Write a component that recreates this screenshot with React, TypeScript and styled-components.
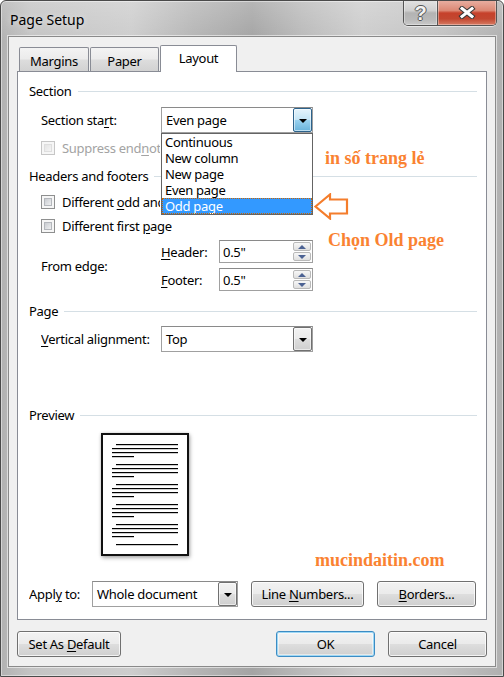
import React from "react";
import styled, { createGlobalStyle } from "styled-components";

const GlobalStyle = createGlobalStyle`
  html, body { margin: 0; padding: 0; background: #ffffff; }
  body { font-family: "Noto Sans", "Open Sans", Arial, sans-serif; }
  *, *::before, *::after { box-sizing: border-box; }
`;

const Window = styled.div`
  position: relative;
  width: 504px;
  height: 677px;
  display: flex;
  flex-direction: column;
  border: 1px solid #4a4a4a;
  border-radius: 6px 6px 0 0;
  background:
    linear-gradient(180deg, rgba(255,255,255,0.2) 0%, rgba(255,255,255,0) 40px),
    linear-gradient(90deg, #b2b2b2 0%, #c4c4c4 6%, #cdcdcd 26%, #b6b6b6 38%, #a4a4a4 50%, #bababa 60%, #cdcdcd 72%, #c2c2c2 88%, #b0b0b0 100%);
  box-shadow: inset 0 0 0 1px rgba(255,255,255,0.45);
  overflow: hidden;
`;

const TitleBar = styled.div`
  flex: none;
  height: 35px;
  display: flex;
  align-items: flex-start;
  justify-content: space-between;
  padding: 0 6px 0 9px;
`;

const TitleText = styled.div`
  margin-top: 9px;
  font-size: 14px;
  line-height: 20px;
  color: #000;
  text-shadow: 0 0 6px rgba(255,255,255,0.7);
`;

const CaptionGroup = styled.div`
  display: flex;
  margin-top: -1px;
  height: 26px;
  border: 1px solid #555;
  border-top: none;
  border-radius: 0 0 5px 5px;
  overflow: hidden;
  box-shadow: 0 1px 0 rgba(255,255,255,0.55);
`;

const CaptionButton = styled.div<{ $close?: boolean }>`
  width: ${(p) => (p.$close ? 59 : 33)}px;
  display: flex;
  align-items: center;
  justify-content: center;
  box-shadow: inset 0 0 0 1px rgba(255,255,255,0.35);
  background: ${(p) =>
    p.$close
      ? "linear-gradient(180deg, #e9b1a4 0%, #dc8874 42%, #c6412b 52%, #c24730 75%, #d77b63 100%)"
      : "linear-gradient(180deg, #e3e3e3 0%, #cfcfcf 42%, #b3b3b3 52%, #b9b9b9 78%, #c9c9c9 100%)"};
  & + & {
    border-left: 1px solid #555;
  }
`;

const HelpGlyph = styled.span`
  font-family: "Liberation Sans", Arial, sans-serif;
  font-weight: 700;
  font-size: 20px;
  line-height: 20px;
  color: #f2f2f2;
  text-shadow: 1px 0 0 #555, -1px 0 0 #555, 0 1px 0 #555, 0 -1px 0 #555;
`;

const Client = styled.div`
  flex: 1;
  margin: 0 7px 9px 7px;
  background: #f0f0f0;
  border: 1px solid #8a8a8a;
  box-shadow: 0 0 0 1px rgba(255,255,255,0.55);
  padding: 8px 8px 9px 8px;
  display: flex;
  flex-direction: column;
  font-size: 13px;
  letter-spacing: -0.3px;
  color: #000;
`;

const TabRow = styled.div`
  position: relative;
  z-index: 2;
  flex: none;
  height: 27px;
  margin-bottom: -1px;
  padding-left: 2px;
  display: flex;
  align-items: flex-end;
`;

const Tab = styled.div<{ $w: number; $active?: boolean }>`
  width: ${(p) => p.$w}px;
  height: ${(p) => (p.$active ? 27 : 24)}px;
  margin-bottom: ${(p) => (p.$active ? 0 : 1)}px;
  margin-right: ${(p) => (p.$active ? 0 : 1)}px;
  border: 1px solid #898c95;
  border-bottom: none;
  border-radius: 2px 2px 0 0;
  display: flex;
  justify-content: center;
  align-items: center;
  padding-top: ${(p) => (p.$active ? 0 : 3)}px;
  padding-bottom: ${(p) => (p.$active ? 2 : 0)}px;
  background: ${(p) =>
    p.$active ? "#ffffff" : "linear-gradient(180deg, #f3f3f3 0%, #ebebeb 48%, #dddddd 52%, #d2d2d2 100%)"};
`;

const Panel = styled.div`
  position: relative;
  z-index: 1;
  flex: none;
  height: 549px;
  background: #ffffff;
  border: 1px solid #898c95;
  padding: 10px 9px 12px 11px;
  display: flex;
  flex-direction: column;
`;

const GroupHeader = styled.div<{ $top?: number }>`
  flex: none;
  display: flex;
  align-items: center;
  gap: 6px;
  height: 18px;
  margin-top: ${(p) => p.$top ?? 0}px;
  white-space: nowrap;
  &::after {
    content: "";
    flex: 1;
    height: 1px;
    background: #d5dfe5;
  }
`;

const FieldRow = styled.div<{ $top?: number; $indent?: number }>`
  flex: none;
  display: flex;
  align-items: center;
  height: 26px;
  margin-top: ${(p) => p.$top ?? 0}px;
  padding-left: ${(p) => p.$indent ?? 0}px;
`;

const Label = styled.span<{ $w?: number; $disabled?: boolean }>`
  flex: none;
  width: ${(p) => (p.$w ? `${p.$w}px` : "auto")};
  white-space: nowrap;
  overflow: hidden;
  color: ${(p) => (p.$disabled ? "#a3a3a3" : "#000")};
  line-height: 16px;
`;

const Key = styled.span`
  text-decoration: underline;
  text-underline-offset: 2px;
  text-decoration-thickness: 1px;
`;

const CheckRow = styled.div<{ $top?: number }>`
  flex: none;
  display: flex;
  align-items: center;
  gap: 7px;
  height: 16px;
  margin-top: ${(p) => p.$top ?? 0}px;
  padding-left: 12px;
`;

const CheckBox = styled.span<{ $disabled?: boolean }>`
  flex: none;
  width: 14px;
  height: 14px;
  border: 1px solid ${(p) => (p.$disabled ? "#c6c6c6" : "#8e8f8f")};
  background: #f6f6f6;
  padding: 2px;
  &::before {
    content: "";
    display: block;
    width: 100%;
    height: 100%;
    border: 1px solid ${(p) => (p.$disabled ? "#dedede" : "#b4b7bc")};
    background: ${(p) =>
      p.$disabled
        ? "linear-gradient(135deg, #e4e4e4 0%, #f4f4f4 100%)"
        : "linear-gradient(135deg, #c9ccd1 0%, #eeeff0 100%)"};
  }
`;

const Combo = styled.div<{ $w: number }>`
  position: relative;
  flex: none;
  width: ${(p) => p.$w}px;
  height: 26px;
  border: 1px solid #a0a0a0;
  border-top-color: #8a8a8a;
  background: #fff;
  display: flex;
  align-items: stretch;
`;

const ComboValue = styled.span`
  flex: 1;
  padding-left: 4px;
  display: flex;
  align-items: center;
  white-space: nowrap;
`;

const ComboButton = styled.span<{ $open?: boolean }>`
  flex: none;
  width: 19px;
  display: flex;
  align-items: center;
  justify-content: center;
  border: 1px solid ${(p) => (p.$open ? "#2c628b" : "#707070")};
  border-radius: 2px;
  box-shadow: inset 0 0 0 1px rgba(255,255,255,0.55);
  background: ${(p) =>
    p.$open
      ? "linear-gradient(180deg, #e5f4fc 0%, #c4e5f6 48%, #98d1ef 52%, #68b3db 100%)"
      : "linear-gradient(180deg, #f2f2f2 0%, #ebebeb 48%, #dddddd 52%, #cfcfcf 100%)"};
`;

const DownArrow = styled.span`
  width: 0;
  height: 0;
  border-left: 4px solid transparent;
  border-right: 4px solid transparent;
  border-top: 4px solid #000;
  margin-top: 1px;
`;

const DropList = styled.div`
  position: absolute;
  z-index: 5;
  top: calc(100% + 1px);
  left: -1px;
  right: -1px;
  background: #fff;
  border: 1px solid #646464;
  display: flex;
  flex-direction: column;
`;

const DropItem = styled.div<{ $selected?: boolean }>`
  height: 16px;
  line-height: 16px;
  padding-left: 3px;
  white-space: nowrap;
  color: ${(p) => (p.$selected ? "#fff" : "#000")};
  background: ${(p) => (p.$selected ? "#3399ff" : "transparent")};
  outline: ${(p) => (p.$selected ? "1px dotted #cc6600" : "none")};
  outline-offset: -1px;
`;

const EdgeGrid = styled.div`
  flex: none;
  display: grid;
  grid-template-columns: 120px 58px 94px;
  grid-template-rows: 23px 23px;
  row-gap: 5px;
  align-items: center;
  margin-top: 6px;
  padding-left: 12px;
`;

const SpanLabel = styled(Label)`
  grid-row: 1 / span 2;
`;

const SpinBox = styled.div`
  height: 23px;
  border: 1px solid #a0a0a0;
  border-top-color: #8a8a8a;
  background: #fff;
  display: flex;
`;

const SpinValue = styled.span`
  flex: 1;
  padding-left: 3px;
  display: flex;
  align-items: center;
`;

const SpinButtons = styled.div`
  flex: none;
  width: 19px;
  padding: 1px 1px 1px 0;
  display: flex;
  flex-direction: column;
  gap: 1px;
`;

const SpinButton = styled.span`
  flex: 1;
  display: flex;
  align-items: center;
  justify-content: center;
  border: 1px solid #b9b9b9;
  border-radius: 2px;
  background: linear-gradient(180deg, #f7f7f7 0%, #ececec 50%, #dfdfdf 100%);
`;

const SpinArrow = styled.span<{ $up?: boolean }>`
  width: 0;
  height: 0;
  border-left: 4px solid transparent;
  border-right: 4px solid transparent;
  ${(p) => (p.$up ? "border-bottom: 4px solid #4c6293;" : "border-top: 4px solid #4c6293;")}
`;

const PreviewPage = styled.div`
  flex: none;
  width: 88px;
  height: 123px;
  margin: 9px 0 0 72px;
  border: 2px solid #111;
  background: #fff;
  box-shadow: 1px 2px 4px rgba(0,0,0,0.3), 0 0 3px rgba(0,0,0,0.15);
  svg { display: block; }
`;

const ApplyRow = styled.div`
  flex: none;
  margin-top: auto;
  height: 26px;
  display: flex;
  align-items: center;
`;

const PushButton = styled.div<{ $w: number; $left?: number; $default?: boolean }>`
  flex: none;
  width: ${(p) => p.$w}px;
  height: 26px;
  margin-left: ${(p) => p.$left ?? 0}px;
  display: flex;
  align-items: center;
  justify-content: center;
  white-space: nowrap;
  border: 1px solid ${(p) => (p.$default ? "#3c8cc4" : "#707070")};
  border-radius: 3px;
  background: linear-gradient(180deg, #f2f2f2 0%, #ebebeb 48%, #dddddd 52%, #cfcfcf 100%);
  box-shadow: ${(p) =>
    p.$default
      ? "inset 0 0 0 1px #9fd8f5, inset 0 0 0 2px rgba(255,255,255,0.5)"
      : "inset 0 0 0 1px rgba(255,255,255,0.75)"};
`;

const ButtonText = styled.span`
  white-space: pre;
  line-height: 16px;
`;

const Footer = styled.div`
  flex: none;
  margin-top: 11px;
  height: 26px;
  display: flex;
  align-items: center;
`;

const FooterSpacer = styled.div`
  flex: 1;
`;

const Annotation = styled.div<{ $x: number; $y: number }>`
  position: absolute;
  z-index: 10;
  left: ${(p) => p.$x}px;
  top: ${(p) => p.$y}px;
  font-family: "Liberation Serif", "Times New Roman", serif;
  font-weight: 700;
  font-size: 18px;
  line-height: 22px;
  letter-spacing: 0;
  color: #fa8231;
  white-space: nowrap;
`;

const ArrowMark = styled.svg`
  position: absolute;
  z-index: 10;
  left: 296px;
  top: 121px;
`;

const previewLines = (() => {
  const rects: { x: number; y: number; w: number }[] = [];
  for (let g = 0; g < 5; g++) {
    const y = 9 + g * 20;
    rects.push({ x: 13, y, w: 62 });
    rects.push({ x: 9, y: y + 4, w: 66 });
    rects.push({ x: 9, y: y + 8, w: 66 });
    rects.push({ x: 9, y: y + 12, w: 22 });
  }
  rects.push({ x: 13, y: 109, w: 62 });
  return rects;
})();

const items = ["Continuous", "New column", "New page", "Even page", "Odd page"];

export default function App() {
  return (
    <>
      <GlobalStyle />
      <Window>
        <TitleBar>
          <TitleText>Page Setup</TitleText>
          <CaptionGroup>
            <CaptionButton>
              <HelpGlyph>?</HelpGlyph>
            </CaptionButton>
            <CaptionButton $close>
              <svg width="18" height="13" viewBox="0 0 18 13">
                <path d="M4 2.5 L14 10.5 M14 2.5 L4 10.5" stroke="#3a3a3a" strokeWidth="5" strokeLinecap="square" fill="none" />
                <path d="M4 2.5 L14 10.5 M14 2.5 L4 10.5" stroke="#ffffff" strokeWidth="3" strokeLinecap="square" fill="none" />
              </svg>
            </CaptionButton>
          </CaptionGroup>
        </TitleBar>
        <Client>
          <TabRow>
            <Tab $w={70}>Margins</Tab>
            <Tab $w={69}>Paper</Tab>
            <Tab $w={77} $active>Layout</Tab>
          </TabRow>
          <Panel>
            <GroupHeader>Section</GroupHeader>
            <FieldRow $top={7} $indent={12}>
              <Label $w={120}>
                Section sta<Key>r</Key>t:
              </Label>
              <Combo $w={152}>
                <ComboValue>Even page</ComboValue>
                <ComboButton $open>
                  <DownArrow />
                </ComboButton>
                <DropList>
                  {items.map((it, i) => (
                    <DropItem key={it} $selected={i === items.length - 1}>
                      {it}
                    </DropItem>
                  ))}
                </DropList>
              </Combo>
            </FieldRow>
            <CheckRow $top={7}>
              <CheckBox $disabled />
              <Label $disabled $w={98}>
                Suppress end<Key>n</Key>otes
              </Label>
            </CheckRow>
            <GroupHeader $top={11}>Headers and footers</GroupHeader>
            <CheckRow $top={9}>
              <CheckBox />
              <Label $w={98}>
                Different <Key>o</Key>dd and even
              </Label>
            </CheckRow>
            <CheckRow $top={8}>
              <CheckBox />
              <Label>
                Different first <Key>p</Key>age
              </Label>
            </CheckRow>
            <EdgeGrid>
              <SpanLabel>From edge:</SpanLabel>
              <Label>
                <Key>H</Key>eader:
              </Label>
              <SpinBox>
                <SpinValue>0.5"</SpinValue>
                <SpinButtons>
                  <SpinButton>
                    <SpinArrow $up />
                  </SpinButton>
                  <SpinButton>
                    <SpinArrow />
                  </SpinButton>
                </SpinButtons>
              </SpinBox>
              <Label>
                <Key>F</Key>ooter:
              </Label>
              <SpinBox>
                <SpinValue>0.5"</SpinValue>
                <SpinButtons>
                  <SpinButton>
                    <SpinArrow $up />
                  </SpinButton>
                  <SpinButton>
                    <SpinArrow />
                  </SpinButton>
                </SpinButtons>
              </SpinBox>
            </EdgeGrid>
            <GroupHeader $top={11}>Page</GroupHeader>
            <FieldRow $top={6} $indent={12}>
              <Label $w={120}>
                <Key>V</Key>ertical alignment:
              </Label>
              <Combo $w={152}>
                <ComboValue>Top</ComboValue>
                <ComboButton>
                  <DownArrow />
                </ComboButton>
              </Combo>
            </FieldRow>
            <GroupHeader $top={54}>Preview</GroupHeader>
            <PreviewPage>
              <svg width="84" height="119" viewBox="0 0 84 119">
                {previewLines.map((r, i) => (
                  <rect key={i} x={r.x} y={r.y} width={r.w} height={1.2} fill="#000" />
                ))}
              </svg>
            </PreviewPage>
            <ApplyRow>
              <Label $w={63}>
                Appl<Key>y</Key> to:
              </Label>
              <Combo $w={146}>
                <ComboValue>Whole document</ComboValue>
                <ComboButton>
                  <DownArrow />
                </ComboButton>
              </Combo>
              <PushButton $w={113} $left={13}>
                <ButtonText>
                  Line <Key>N</Key>umbers...
                </ButtonText>
              </PushButton>
              <PushButton $w={99} $left={13}>
                <ButtonText>
                  <Key>B</Key>orders...
                </ButtonText>
              </PushButton>
            </ApplyRow>
            <Annotation $x={307} $y={75}>in số trang lẻ</Annotation>
            <ArrowMark width="35" height="27" viewBox="0 0 35 27">
              <polygon
                points="1.5,13.5 16,1.5 16,6.5 33,6.5 33,20.5 16,20.5 16,25.5"
                fill="#ffffff"
                stroke="#f47d2c"
                strokeWidth="2.2"
                strokeLinejoin="miter"
              />
            </ArrowMark>
            <Annotation $x={310} $y={157}>Chọn Old page</Annotation>
            <Annotation $x={297} $y={477}>mucindaitin.com</Annotation>
          </Panel>
          <Footer>
            <PushButton $w={104}>
              <ButtonText>
                Set As <Key>D</Key>efault
              </ButtonText>
            </PushButton>
            <FooterSpacer />
            <PushButton $w={99} $default>
              <ButtonText>OK</ButtonText>
            </PushButton>
            <PushButton $w={99} $left={13}>
              <ButtonText>Cancel</ButtonText>
            </PushButton>
          </Footer>
        </Client>
      </Window>
    </>
  );
}
